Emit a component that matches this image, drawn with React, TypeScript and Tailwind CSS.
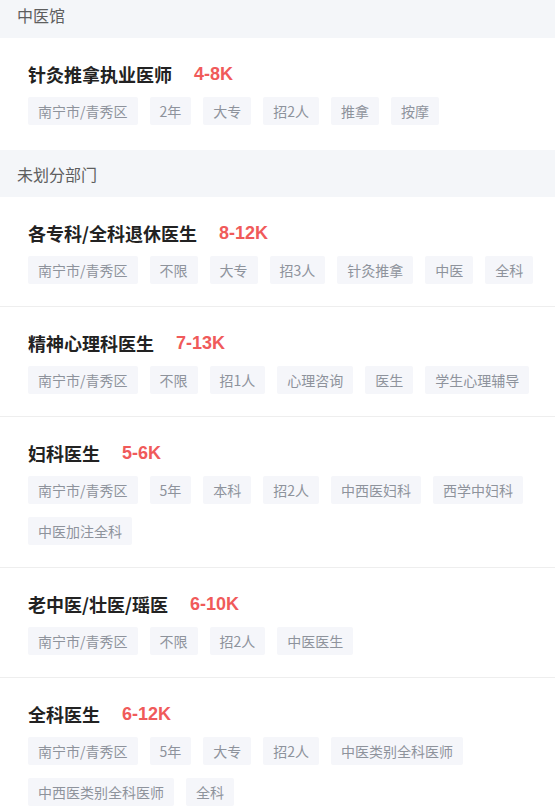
import React from "react";

type Job = { title: string; salary: string; tags: string[] };
type Section = { name: string; jobs: Job[] };

const sections: Section[] = [
  {
    name: "中医馆",
    jobs: [
      { title: "针灸推拿执业医师", salary: "4-8K", tags: ["南宁市/青秀区", "2年", "大专", "招2人", "推拿", "按摩"] },
    ],
  },
  {
    name: "未划分部门",
    jobs: [
      { title: "各专科/全科退休医生", salary: "8-12K", tags: ["南宁市/青秀区", "不限", "大专", "招3人", "针灸推拿", "中医", "全科"] },
      { title: "精神心理科医生", salary: "7-13K", tags: ["南宁市/青秀区", "不限", "招1人", "心理咨询", "医生", "学生心理辅导"] },
      { title: "妇科医生", salary: "5-6K", tags: ["南宁市/青秀区", "5年", "本科", "招2人", "中西医妇科", "西学中妇科", "中医加注全科"] },
      { title: "老中医/壮医/瑶医", salary: "6-10K", tags: ["南宁市/青秀区", "不限", "招2人", "中医医生"] },
      { title: "全科医生", salary: "6-12K", tags: ["南宁市/青秀区", "5年", "大专", "招2人", "中医类别全科医师", "中西医类别全科医师", "全科"] },
    ],
  },
];

const font = { fontFamily: '"Noto Sans CJK SC", "Noto Sans", sans-serif' };

function JobCard({ job, last }: { job: Job; last: boolean }) {
  return (
    <div
      className={`bg-white pl-[28px] pr-4 pt-[25px] ${last ? "pb-[25px]" : "pb-[22px] border-b border-[#eeeeee]"}`}
    >
      <div className="flex items-center h-[22px]">
        <span className="text-[18px] leading-[22px] font-bold text-[#222222]">{job.title}</span>
        <span
          className="ml-[22px] text-[18px] leading-[22px] font-bold text-[#f05a5a]"
          style={{ fontFamily: '"Liberation Sans", Arial, sans-serif' }}
        >
          {job.salary}
        </span>
      </div>
      <div className="mt-[12px] flex flex-wrap gap-x-[12px] gap-y-[13px]">
        {job.tags.map((t, i) => (
          <span
            key={i}
            className="h-[28px] px-[10px] flex items-center rounded-[2px] bg-[#f5f6fa] text-[14px] text-[#8e939c] leading-none"
          >
            {t}
          </span>
        ))}
      </div>
    </div>
  );
}

export default function App() {
  return (
    <div className="w-[555px] bg-white overflow-hidden h-[810px]" style={font}>
      <div className="-mt-[9px]">
        {sections.map((s, si) => (
          <div key={si}>
            <div className="h-[47px] bg-[#f4f6f9] flex items-center pl-[17px] text-[16px] text-[#5e5e5e]">
              {s.name}
            </div>
            {s.jobs.map((j, ji) => (
              <JobCard key={ji} job={j} last={ji === s.jobs.length - 1} />
            ))}
          </div>
        ))}
      </div>
    </div>
  );
}
